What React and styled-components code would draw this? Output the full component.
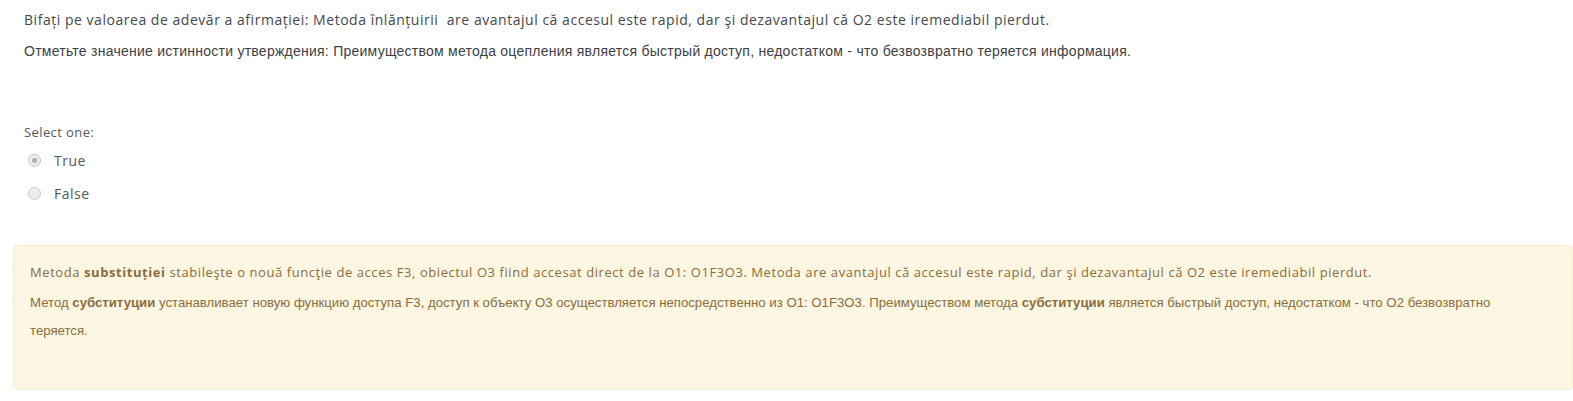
import React from "react";
import styled, { createGlobalStyle } from "styled-components";

const Global = createGlobalStyle`
  html, body { margin: 0; padding: 0; background: #fff; }
  body { font-family: "Open Sans", sans-serif; color: #373a3c; }
`;

const Page = styled.div`
  padding: 9px 0 0 0;
  width: 1573px;
`;

const Question = styled.div`
  padding: 0 24px;
`;

const Para = styled.p`
  margin: 0 0 11px 0;
  font-size: 14px;
  letter-spacing: ${(p) => (p.$cyr ? "0.25px" : "0.53px")};
  font-family: ${(p) => (p.$cyr ? `"Liberation Sans", sans-serif` : `"Open Sans", sans-serif`)};
  line-height: 21px;
  color: ${(p) => (p.$cyr ? "#3d4043" : "#45484b")};
`;

const Answer = styled.div`
  margin-top: 60px;
  padding: 0 24px;
`;

const Prompt = styled.div`
  font-size: 13px;
  letter-spacing: 0.4px;
  line-height: 20px;
  color: #55595c;
  margin-bottom: 2px;
`;

const Option = styled.label`
  display: flex;
  align-items: center;
  gap: 13px;
  height: 33px;
  padding-left: 4px;
  font-size: 14px;
  letter-spacing: 0.5px;
  color: #55595c;
`;

const Radio = styled.span`
  width: 13px;
  height: 13px;
  border-radius: 50%;
  border: 1px solid #c6c6c6;
  background: #ededed;
  box-sizing: border-box;
  display: flex;
  align-items: center;
  justify-content: center;
  &::after {
    content: "";
    width: 5px;
    height: 5px;
    border-radius: 50%;
    background: ${(p) => (p.$checked ? "#acacac" : "transparent")};
  }
`;

const Feedback = styled.div`
  margin: 35px 0 0 13px;
  border: 1px solid #faefd0;
  border-radius: 4px;
  background: #fcf6e2;
  padding: 16px 30px 44px 16px;
  color: #8a6d3b;
`;

const FbPara = styled.p`
  margin: 0 0 ${(p) => (p.$cyr ? "0" : "7px")} 0;
  font-size: ${(p) => (p.$cyr ? "13.2px" : "13px")};
  line-height: ${(p) => (p.$cyr ? "28px" : "20px")};
  letter-spacing: ${(p) => (p.$cyr ? "0" : "0.57px")};
  font-family: ${(p) => (p.$cyr ? `"Liberation Sans", sans-serif` : `"Open Sans", sans-serif`)};
  b { font-weight: 700; }
`;

export default function App() {
  return (
    <Page>
      <Global />
      <Question>
        <Para>Bifați pe valoarea de adevăr a afirmației: Metoda înlănțuirii&nbsp; are avantajul că accesul este rapid, dar şi dezavantajul că O2 este iremediabil pierdut.</Para>
        <Para $cyr>Отметьте значение истинности утверждения: Преимуществом метода оцепления является быстрый доступ, недостатком - что безвозвратно теряется информация.</Para>
      </Question>
      <Answer>
        <Prompt>Select one:</Prompt>
        <Option><Radio $checked />True</Option>
        <Option><Radio />False</Option>
      </Answer>
      <Feedback>
        <FbPara>Metoda <b>substituției</b> stabileşte o nouă funcţie de acces F3, obiectul O3 fiind accesat direct de la O1: O1F3O3. Metoda are avantajul că accesul este rapid, dar şi dezavantajul că O2 este iremediabil pierdut.</FbPara>
        <FbPara $cyr>Метод <b>субституции</b> устанавливает новую функцию доступа F3, доступ к объекту O3 осуществляется непосредственно из O1: O1F3O3. Преимуществом метода <b>субституции</b> является быстрый доступ, недостатком - что O2 безвозвратно <span>теряется.</span></FbPara>
      </Feedback>
    </Page>
  );
}
